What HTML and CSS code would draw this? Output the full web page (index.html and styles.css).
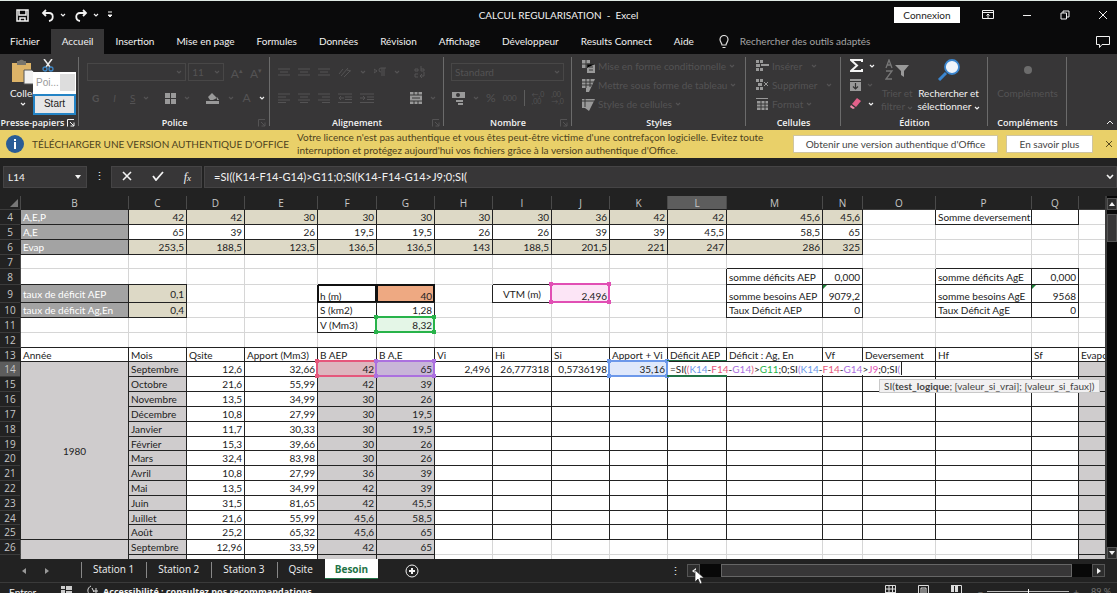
FILE: index.html
```html
<!DOCTYPE html>
<html lang="fr">
<head>
  <meta charset="UTF-8">
  <meta name="viewport" content="width=device-width, initial-scale=1.0">
  <title>CALCUL REGULARISATION - Excel</title>
  <link rel="stylesheet" href="styles.css">
</head>
<body>
  <!-- Shared icons -->
  <svg class="sprite" aria-hidden="true">
    <symbol id="chev" viewBox="0 0 6 4"><path d="M1 1l2 2 2-2" fill="none" stroke="currentColor" stroke-width="1.2"/></symbol>
    <symbol id="launch" viewBox="0 0 8 8"><path d="M.5 7.500V.5H7M3 3l4 4M7 3.500V7H3.500" fill="none" stroke="currentColor"/></symbol>
    <symbol id="left" viewBox="0 0 6 8"><path d="M5 1v6L1 4z" fill="currentColor"/></symbol>
    <symbol id="right" viewBox="0 0 6 8"><path d="M1 1v6l4-3z" fill="currentColor"/></symbol>
    <symbol id="up" viewBox="0 0 8 6"><path d="M1 5h6L4 1z" fill="currentColor"/></symbol>
    <symbol id="down" viewBox="0 0 8 6"><path d="M1 1h6L4 5z" fill="currentColor"/></symbol>
    <symbol id="lines-c" viewBox="0 0 12 10"><path d="M0 1h12M2 4h8M0 7h12M2 9.500h8" stroke="currentColor" fill="none"/></symbol>
    <symbol id="lines-l" viewBox="0 0 12 10"><path d="M0 1h12M0 4h8M0 7h12M0 9.500h8" stroke="currentColor" fill="none"/></symbol>
    <symbol id="lines-r" viewBox="0 0 12 10"><path d="M0 1h12M4 4h8M0 7h12M4 9.500h8" stroke="currentColor" fill="none"/></symbol>
    <symbol id="valign" viewBox="0 0 12 10"><path d="M0 2h12M2 5h8M0 8h12" stroke="currentColor" fill="none"/></symbol>
    <symbol id="indent" viewBox="0 0 14 10"><path d="M0 1h14M7 4h7M7 6.500h7M0 9.500h14M0 5h5M3 3l2 2-2 2" stroke="currentColor" fill="none"/></symbol>
    <symbol id="outdent" viewBox="0 0 14 10"><path d="M0 1h14M7 4h7M7 6.500h7M0 9.500h14M1 5h5M3 3L1 5l2 2" stroke="currentColor" fill="none"/></symbol>
  </svg>

  <div class="app">
    <header class="titlebar">
      <div class="quick">
        <button aria-label="Enregistrer"><svg width="13" height="13" viewBox="0 0 13 13"><path d="M1 1h11v11H1zM3 1v5h7V1M4 12V9h5v3" fill="none" stroke="currentColor" stroke-width="1.500"/></svg></button>
        <button aria-label="Annuler"><svg width="14" height="13" viewBox="0 0 14 13"><path d="M5 1L2 4l3 3M2 4h6c5 0 5 7 0 8" fill="none" stroke="currentColor" stroke-width="1.800"/></svg><svg width="6" height="4"><use href="#chev"/></svg></button>
        <button aria-label="Rétablir"><svg width="14" height="13" viewBox="0 0 14 13"><path d="M9 1l3 3-3 3M12 4H6c-5 0-5 7 0 8" fill="none" stroke="currentColor" stroke-width="1.800"/></svg><svg width="6" height="4"><use href="#chev"/></svg></button>
        <button aria-label="Personnaliser"><svg width="6" height="8" viewBox="0 0 6 8"><path d="M1 1h4M1 4h4L3 6z" stroke="currentColor" fill="currentColor"/></svg></button>
      </div>
      <h1>CALCUL REGULARISATION&nbsp; -&nbsp; Excel</h1>
      <div class="window-buttons">
        <button class="signin">Connexion</button>
        <button aria-label="Options du ruban"><svg width="12" height="10" viewBox="0 0 12 10"><path d="M.5.5h11v8H.5zM.5 2.500h11M6 8V4M4.500 5.500L6 4l1.500 1.500" fill="none" stroke="currentColor"/></svg></button>
        <button aria-label="Réduire"><svg width="10" height="10" viewBox="0 0 10 10"><path d="M1 5.500h8" stroke="currentColor"/></svg></button>
        <button aria-label="Restaurer"><svg width="10" height="10" viewBox="0 0 10 10"><path d="M1 3h5.500v6H1zM3 3V1h6v6H7" fill="none" stroke="currentColor"/></svg></button>
        <button aria-label="Fermer"><svg width="10" height="10" viewBox="0 0 10 10"><path d="M1 1l8 8M9 1L1 9" stroke="currentColor"/></svg></button>
      </div>
    </header>

    <nav class="tabs">
      <a href="#">Fichier</a>
      <a href="#" class="active">Accueil</a>
      <a href="#">Insertion</a>
      <a href="#">Mise en page</a>
      <a href="#">Formules</a>
      <a href="#">Données</a>
      <a href="#">Révision</a>
      <a href="#">Affichage</a>
      <a href="#">Développeur</a>
      <a href="#">Results Connect</a>
      <a href="#">Aide</a>
      <label class="tell-me">
        <svg width="10" height="14" viewBox="0 0 10 14"><path d="M3 10C3 8 1 7 1 4.500a4 4 0 018 0C9 7 7 8 7 10zM3.500 12.500h3" fill="none" stroke="#ddd" stroke-width="1.200"/></svg>
        <input type="text" placeholder="Rechercher des outils adaptés">
      </label>
      <button class="comments" aria-label="Commentaires"><svg width="14" height="12" viewBox="0 0 14 12"><path d="M.5.5h13v8H6l-2.500 3v-3h-3z" fill="none" stroke="currentColor"/></svg></button>
    </nav>

    <section class="ribbon">
      <div class="group clipboard">
        <div class="tools">
          <button class="big paste">
            <svg width="24" height="26" viewBox="0 0 24 26"><path d="M1 4h19v19H1z" fill="#dcb368"/><path d="M6 2h2a3 3 0 015 0h2v4H6z" fill="#77746c"/><path d="M13 11h8l3 3v11H13z" fill="#f1f1f1" stroke="#555"/></svg>
            <span>Coller</span>
            <svg width="6" height="4"><use href="#chev"/></svg>
          </button>
          <svg class="scissors" width="12" height="13" viewBox="0 0 12 13"><path d="M2 0l6 8M10 0L4 8" stroke="#eee" stroke-width="1.500"/><circle cx="3" cy="10" r="2" fill="none" stroke="#3f87c6" stroke-width="1.300"/><circle cx="9" cy="10" r="2" fill="none" stroke="#3f87c6" stroke-width="1.300"/></svg>
        </div>
        <div class="caption">Presse-papiers<svg width="8" height="8"><use href="#launch"/></svg></div>
        <div class="popup">
          <div class="popup-title"><span>Poi...</span><i></i></div>
          <button>Start</button>
        </div>
      </div>

      <div class="group font">
        <div class="tools rows off">
          <div class="line">
            <span class="combo family"><i></i><svg width="6" height="4"><use href="#chev"/></svg></span>
            <span class="combo size"><i>11</i><svg width="6" height="4"><use href="#chev"/></svg></span>
            <span class="glyph grow">A<sup>▴</sup></span>
            <span class="glyph grow">A<sup>▾</sup></span>
          </div>
          <div class="line styles-line">
            <b>G</b><em>I</em><u>S</u><svg width="6" height="4"><use href="#chev"/></svg>
            <i class="bar"></i>
            <svg class="lit" width="11" height="11" viewBox="0 0 11 11"><path d="M0 0h5v5H0zM6 0h5v5H6zM0 6h5v5H0zM6 6h5v5H6z" fill="currentColor"/></svg><svg width="6" height="4"><use href="#chev"/></svg>
            <i class="bar"></i>
            <svg class="lit" width="14" height="12" viewBox="0 0 14 12"><path d="M2 5l4-4 5 5-4 2H4zM11 5l2 3h-2zM0 9h13v3H0z" fill="currentColor"/></svg><svg width="6" height="4"><use href="#chev"/></svg>
            <span class="glyph">A</span><svg class="bright" width="6" height="4"><use href="#chev"/></svg>
          </div>
        </div>
        <div class="caption">Police<svg class="dim" width="8" height="8"><use href="#launch"/></svg></div>
      </div>

      <div class="group align">
        <div class="tools rows off">
          <div class="line">
            <svg width="12" height="10"><use href="#valign"/></svg>
            <svg width="12" height="10"><use href="#valign"/></svg>
            <svg width="12" height="10"><use href="#valign"/></svg>
            <svg width="14" height="12" viewBox="0 0 14 12"><path d="M1 8l4-5M3 10l7-8M6 11l6-6M9 4l4 1" stroke="currentColor" fill="none"/></svg><svg width="6" height="4"><use href="#chev"/></svg>
            <svg width="12" height="10" viewBox="0 0 12 10"><path d="M0 2l3 2-3 2zM8 1v8M10 1v8M12 1H7a2 2 0 000 4" stroke="currentColor" fill="none"/></svg><svg width="6" height="4"><use href="#chev"/></svg>
            <svg class="wrap" width="12" height="12" viewBox="0 0 12 12"><path d="M1 3h3v2H1zM7 0v5h3V3H7M4 8H1v3h3M10 6v4H6M8 8l-2 2 2 2" stroke="currentColor" fill="none"/></svg>
          </div>
          <div class="line">
            <svg width="12" height="10"><use href="#lines-l"/></svg>
            <svg width="12" height="10"><use href="#lines-c"/></svg>
            <svg width="12" height="10"><use href="#lines-r"/></svg>
            <svg width="14" height="10"><use href="#outdent"/></svg>
            <svg width="14" height="10"><use href="#indent"/></svg>
            <svg class="lit merge" width="12" height="12" viewBox="0 0 12 12"><path d="M0 0h12v12H0z" fill="currentColor"/><path d="M0 3h12M0 9h12M4 0v3M8 0v3M4 9v3M8 9v3M2 6h8" stroke="#373637"/></svg><svg width="6" height="4"><use href="#chev"/></svg>
          </div>
        </div>
        <div class="caption">Alignement<svg class="dim" width="8" height="8"><use href="#launch"/></svg></div>
      </div>

      <div class="group number">
        <div class="tools rows off">
          <div class="line"><span class="combo format"><i>Standard</i><svg width="6" height="4"><use href="#chev"/></svg></span></div>
          <div class="line">
            <svg class="lit" width="14" height="14" viewBox="0 0 14 14"><path d="M0 1h13v6H0zM4 9h7v2H4zM6 12h5v2H6z" fill="currentColor"/><circle cx="6" cy="4" r="2" fill="#373637"/></svg><svg width="6" height="4"><use href="#chev"/></svg>
            <span class="glyph">%</span><span class="small">000</span>
            <i class="bar"></i>
            <span class="decimals">←,0<br>,00</span><span class="decimals">,00<br>→,0</span>
          </div>
        </div>
        <div class="caption">Nombre<svg class="dim" width="8" height="8"><use href="#launch"/></svg></div>
      </div>

      <div class="group looks">
        <div class="tools list off">
          <button><svg class="lit" width="13" height="13" viewBox="0 0 13 13"><path d="M0 0h8v4h5v9H5V8H0z" fill="currentColor"/><path d="M0 4h8M4 0v8M7 7h4M7 10h4M5 8V4h8" stroke="#373637"/></svg>Mise en forme conditionnelle<svg width="6" height="4"><use href="#chev"/></svg></button>
          <button><svg class="lit" width="13" height="13" viewBox="0 0 13 13"><path d="M0 0h13L7 13H4V9H0z" fill="currentColor"/><path d="M0 3h12M4 0v9M8 0v8M0 6h10" stroke="#373637"/></svg>Mettre sous forme de tableau<svg width="6" height="4"><use href="#chev"/></svg></button>
          <button><svg class="lit" width="13" height="13" viewBox="0 0 13 13"><path d="M0 1h13L7 13 3 10H0z" fill="currentColor"/><path d="M0 3h12M3 1v8" stroke="#373637"/></svg>Styles de cellules<svg width="6" height="4"><use href="#chev"/></svg></button>
        </div>
        <div class="caption">Styles</div>
      </div>

      <div class="group cells">
        <div class="tools list off">
          <button><svg class="lit" width="13" height="12" viewBox="0 0 13 12"><path d="M0 0h3v3H0zM4 0h3v3H4zM0 4h4v3H0zM5 4h8v2H5zM0 8h3v3H0zM4 8h3v3H4z" fill="currentColor"/></svg>Insérer<svg class="far" width="6" height="4"><use href="#chev"/></svg></button>
          <button><svg class="lit" width="13" height="12" viewBox="0 0 13 12"><path d="M0 0h3v3H0zM4 0h3v3H4zM2 4h4v3H2zM0 8h3v3H0zM4 8h3v3H4z" fill="currentColor"/><path d="M8 3l4 4M12 3L8 7" stroke="currentColor"/></svg>Supprimer<svg class="far" width="6" height="4"><use href="#chev"/></svg></button>
          <button><svg class="lit" width="13" height="12" viewBox="0 0 13 12"><path d="M0 0h12v1H0zM1 3h11v9H1z" fill="currentColor"/><path d="M1 6h11M1 9h11M5 3v9M9 3v9" stroke="#373637"/></svg>Format<svg width="6" height="4"><use href="#chev"/></svg></button>
        </div>
        <div class="caption">Cellules</div>
      </div>

      <div class="group edit">
        <div class="tools">
          <div class="stack">
            <button aria-label="Somme"><svg width="13" height="13" viewBox="0 0 13 13"><path d="M12 3V1H1l6 5.500L1 12h11v-2" fill="none" stroke="#f4f4f4" stroke-width="2"/></svg><svg width="6" height="4"><use href="#chev"/></svg></button>
            <button aria-label="Remplissage" class="off"><svg class="lit" width="11" height="12" viewBox="0 0 11 12"><path d="M0 0h11v12H0z" fill="currentColor"/><path d="M0 2.500h11M5.500 4v6M3 7.500L5.500 10 8 7.500" stroke="#333" fill="none" stroke-width="1.200"/></svg><svg width="6" height="4"><use href="#chev"/></svg></button>
            <button aria-label="Effacer"><svg width="12" height="11" viewBox="0 0 12 11"><path d="M7 0l4 3-5 6-4-3z" fill="#e4608a"/><path d="M1 7l4 3-2 1-3-2z" fill="#f08cab"/></svg><svg width="6" height="4"><use href="#chev"/></svg></button>
          </div>
          <button class="big off sort">
            <svg class="lit" width="24" height="22" viewBox="0 0 24 22"><path d="M1 9l3-8 3 8M2 6h4M1 12h6l-6 8h6" fill="none" stroke="#777" stroke-width="1.300"/><path d="M10 6h14l-5 6v6l-3-2v-4z" fill="currentColor"/></svg>
            <span>Trier et<br>filtrer <svg width="6" height="4"><use href="#chev"/></svg></span>
          </button>
          <button class="big find">
            <svg width="24" height="22" viewBox="0 0 24 22"><path d="M2 21l7-7" stroke="#3b86cf" stroke-width="3"/><circle cx="15" cy="8" r="7" fill="#eef4fb" stroke="#3b86cf" stroke-width="1.800"/></svg>
            <span>Rechercher et<br>sélectionner <svg width="6" height="4"><use href="#chev"/></svg></span>
          </button>
        </div>
        <div class="caption">Édition</div>
      </div>

      <div class="group addins">
        <div class="tools"><button class="big off"><svg width="24" height="22" viewBox="0 0 24 22"><circle cx="12" cy="11" r="4" fill="#6c6c6c"/></svg><span>Compléments</span></button></div>
        <div class="caption">Compléments</div>
      </div>
      <button class="collapse" aria-label="Réduire le ruban"><svg width="8" height="5" viewBox="0 0 8 5"><path d="M1 4l3-3 3 3" fill="none" stroke="currentColor"/></svg></button>
    </section>

    <section class="notice">
      <svg width="18" height="18" viewBox="0 0 18 18"><circle cx="9" cy="9" r="9" fill="#2a5c96"/><path d="M8 7h2v7H8zM8 4h2v2H8z" fill="#fff"/></svg>
      <strong>TÉLÉCHARGER UNE VERSION AUTHENTIQUE D'OFFICE</strong>
      <p>Votre licence n'est pas authentique et vous êtes peut-être victime d'une contrefaçon logicielle. Evitez toute<br>interruption et protégez aujourd'hui vos fichiers grâce à la version authentique d'Office.</p>
      <button class="get">Obtenir une version authentique d'Office</button>
      <button class="more">En savoir plus</button>
      <button class="dismiss" aria-label="Fermer"><svg width="8" height="8" viewBox="0 0 8 8"><path d="M1 1l6 6M7 1L1 7" stroke="#574a1c"/></svg></button>
    </section>

    <section class="formula-bar">
      <div class="name-box"><input type="text" value="L14" aria-label="Zone Nom"><svg width="8" height="6"><use href="#down"/></svg></div>
      <span class="dots">⋮</span>
      <div class="fx">
        <button aria-label="Annuler"><svg width="10" height="10" viewBox="0 0 10 10"><path d="M1 1l8 8M9 1L1 9" stroke="currentColor" stroke-width="1.600"/></svg></button>
        <button aria-label="Entrer"><svg width="12" height="10" viewBox="0 0 12 10"><path d="M1 5l3 4 7-8" fill="none" stroke="currentColor" stroke-width="1.800"/></svg></button>
        <button class="fn" aria-label="Insérer une fonction"><i>f<small>x</small></i></button>
      </div>
      <div class="formula"><input type="text" value="=SI((K14-F14-G14)&gt;G11;0;SI(K14-F14-G14&gt;J9;0;SI(" aria-label="Barre de formule"><svg width="8" height="6" viewBox="0 0 8 6"><path d="M1 1l3 3 3-3" fill="none" stroke="currentColor" stroke-width="1.600"/></svg></div>
    </section>

    <main class="sheet">
      <div class="grid">
        <table>
          <colgroup>
            <col class="w21"><col class="w108"><col class="w58"><col class="w58"><col class="w73"><col class="w59"><col class="w58"><col class="w58"><col class="w59"><col class="w58"><col class="w58"><col class="w59"><col class="w96"><col class="w40"><col class="w73"><col class="w96"><col class="w47"><col class="w58">
          </colgroup>
          <thead>
            <tr><th class="corner"><svg width="8" height="8" viewBox="0 0 8 8"><path d="M8 0v8H0z" fill="#777"/></svg></th><th>B</th><th>C</th><th>D</th><th>E</th><th>F</th><th>G</th><th>H</th><th>I</th><th>J</th><th>K</th><th class="current">L</th><th>M</th><th>N</th><th>O</th><th>P</th><th>Q</th><th></th></tr>
          </thead>
          <tbody>
            <tr><th>4</th><td class="dark">A,E,P</td><td class="tan">42</td><td class="tan">42</td><td class="tan">30</td><td class="tan">30</td><td class="tan">30</td><td class="tan">30</td><td class="tan">30</td><td class="tan">36</td><td class="tan">42</td><td class="tan">42</td><td class="tan">45,6</td><td class="tan">45,6</td><td></td><td class="box txt">Somme deversement</td><td class="box"></td><td></td></tr>
            <tr><th>5</th><td class="dark">A,E</td><td class="box">65</td><td class="box">39</td><td class="box">26</td><td class="box">19,5</td><td class="box">19,5</td><td class="box">26</td><td class="box">26</td><td class="box">39</td><td class="box">39</td><td class="box">45,5</td><td class="box">58,5</td><td class="box">65</td><td></td><td></td><td></td><td></td></tr>
            <tr><th>6</th><td class="dark">Evap</td><td class="tan">253,5</td><td class="tan">188,5</td><td class="tan">123,5</td><td class="tan">136,5</td><td class="tan">136,5</td><td class="tan">143</td><td class="tan">188,5</td><td class="tan">201,5</td><td class="tan">221</td><td class="tan">247</td><td class="tan">286</td><td class="tan">325</td><td></td><td></td><td></td><td></td></tr>
            <tr class="short"><th>7</th><td></td><td></td><td></td><td></td><td></td><td></td><td></td><td></td><td></td><td></td><td></td><td></td><td></td><td></td><td></td><td></td><td></td></tr>
            <tr class="high"><th>8</th><td></td><td></td><td></td><td></td><td></td><td></td><td></td><td></td><td></td><td></td><td></td><td class="box txt">somme déficits AEP</td><td class="box">0,000</td><td></td><td class="box txt">somme déficits AgE</td><td class="box">0,000</td><td></td></tr>
            <tr class="tall"><th>9</th><td class="dark">taux de déficit AEP</td><td class="tan">0,1</td><td></td><td></td><td class="thick txt low">h (m)</td><td class="thick orange low">40</td><td></td><td class="box mid">VTM (m)</td><td class="low ref pink">2,496<i></i></td><td></td><td></td><td class="box txt low">somme besoins AEP</td><td class="box low flag">9079,2</td><td></td><td class="box txt low">somme besoins AgE</td><td class="box low flag">9568</td><td></td></tr>
            <tr><th>10</th><td class="dark">taux de déficit Ag,En</td><td class="tan">0,4</td><td></td><td></td><td class="box txt">S (km2)</td><td class="box">1,28</td><td></td><td></td><td></td><td></td><td></td><td class="box txt">Taux Déficit AEP</td><td class="box">0</td><td></td><td class="box txt">Taux Déficit AgE</td><td class="box">0</td><td></td></tr>
            <tr><th>11</th><td></td><td></td><td></td><td></td><td class="box txt">V (Mm3)</td><td class="ref green">8,32<i></i></td><td></td><td></td><td></td><td></td><td></td><td></td><td></td><td></td><td></td><td></td><td></td></tr>
            <tr><th>12</th><td></td><td></td><td></td><td></td><td></td><td></td><td></td><td></td><td></td><td></td><td></td><td></td><td></td><td></td><td></td><td></td><td></td></tr>
            <tr class="short labels"><th>13</th><td>Année</td><td>Mois</td><td>Qsite</td><td>Apport (Mm3)</td><td>B AEP</td><td>B A,E</td><td>Vi</td><td>Hi</td><td>Si</td><td>Apport + Vi</td><td>Déficit AEP</td><td>Déficit : Ag, En</td><td>Vf</td><td>Deversement</td><td>Hf</td><td>Sf</td><td>Evaporation</td></tr>
          </tbody>
          <tbody class="months">
            <tr><th class="current">14</th><td class="gray mid" rowspan="12">1980</td><td class="gray txt">Septembre</td><td>12,6</td><td>32,66</td><td class="gray ref red">42<i></i></td><td class="gray ref purple">65<i></i></td><td>2,496</td><td>26,777318</td><td>0,5736198</td><td class="ref blue">35,16<i></i></td>
              <td class="editing"><span class="typed">=SI(<span class="c-red">(</span><span class="c-blue">K14</span>-<span class="c-red">F14</span>-<span class="c-purple">G14</span><span class="c-red">)</span>&gt;<span class="c-green">G11</span>;0;SI<span class="c-purple">(</span><span class="c-blue">K14</span>-<span class="c-red">F14</span>-<span class="c-purple">G14</span>&gt;<span class="c-pink">J9</span>;0;SI<span class="c-purple">(</span></span><span class="hint">SI(<b>test_logique</b>; [valeur_si_vrai]; [valeur_si_faux])</span></td>
              <td></td><td></td><td></td><td></td><td></td><td class="gray"></td></tr>
            <tr><th>15</th><td class="gray txt">Octobre</td><td>21,6</td><td>55,99</td><td class="gray">42</td><td class="gray">39</td><td></td><td></td><td></td><td></td><td></td><td></td><td></td><td></td><td></td><td></td><td class="gray"></td></tr>
            <tr><th>16</th><td class="gray txt">Novembre</td><td>13,5</td><td>34,99</td><td class="gray">30</td><td class="gray">26</td><td></td><td></td><td></td><td></td><td></td><td></td><td></td><td></td><td></td><td></td><td class="gray"></td></tr>
            <tr><th>17</th><td class="gray txt">Décembre</td><td>10,8</td><td>27,99</td><td class="gray">30</td><td class="gray">19,5</td><td></td><td></td><td></td><td></td><td></td><td></td><td></td><td></td><td></td><td></td><td class="gray"></td></tr>
            <tr><th>18</th><td class="gray txt">Janvier</td><td>11,7</td><td>30,33</td><td class="gray">30</td><td class="gray">19,5</td><td></td><td></td><td></td><td></td><td></td><td></td><td></td><td></td><td></td><td></td><td class="gray"></td></tr>
            <tr class="short"><th>19</th><td class="gray txt">Février</td><td>15,3</td><td>39,66</td><td class="gray">30</td><td class="gray">26</td><td></td><td></td><td></td><td></td><td></td><td></td><td></td><td></td><td></td><td></td><td class="gray"></td></tr>
            <tr><th>20</th><td class="gray txt">Mars</td><td>32,4</td><td>83,98</td><td class="gray">30</td><td class="gray">26</td><td></td><td></td><td></td><td></td><td></td><td></td><td></td><td></td><td></td><td></td><td class="gray"></td></tr>
            <tr><th>21</th><td class="gray txt">Avril</td><td>10,8</td><td>27,99</td><td class="gray">36</td><td class="gray">39</td><td></td><td></td><td></td><td></td><td></td><td></td><td></td><td></td><td></td><td></td><td class="gray"></td></tr>
            <tr><th>22</th><td class="gray txt">Mai</td><td>13,5</td><td>34,99</td><td class="gray">42</td><td class="gray">39</td><td></td><td></td><td></td><td></td><td></td><td></td><td></td><td></td><td></td><td></td><td class="gray"></td></tr>
            <tr><th>23</th><td class="gray txt">Juin</td><td>31,5</td><td>81,65</td><td class="gray">42</td><td class="gray">45,5</td><td></td><td></td><td></td><td></td><td></td><td></td><td></td><td></td><td></td><td></td><td class="gray"></td></tr>
            <tr class="short"><th>24</th><td class="gray txt">Juillet</td><td>21,6</td><td>55,99</td><td class="gray">45,6</td><td class="gray">58,5</td><td></td><td></td><td></td><td></td><td></td><td></td><td></td><td></td><td></td><td></td><td class="gray"></td></tr>
            <tr><th>25</th><td class="gray txt">Août</td><td>25,2</td><td>65,32</td><td class="gray">45,6</td><td class="gray">65</td><td></td><td></td><td></td><td></td><td></td><td></td><td></td><td></td><td></td><td></td><td class="gray"></td></tr>
          </tbody>
          <tbody>
            <tr><th>26</th><td class="gray" rowspan="2"></td><td class="gray box txt">Septembre</td><td class="box">12,96</td><td class="box">33,59</td><td class="gray box">42</td><td class="gray box">65</td><td></td><td></td><td></td><td></td><td></td><td></td><td></td><td></td><td></td><td></td><td class="gray box"></td></tr>
            <tr><th></th><td class="gray box"></td><td class="box"></td><td class="box"></td><td class="gray box"></td><td class="gray box"></td><td></td><td></td><td></td><td></td><td></td><td></td><td></td><td></td><td></td><td></td><td class="gray box"></td></tr>
          </tbody>
        </table>
      </div>
      <div class="vscroll">
        <button aria-label="Haut"><svg width="8" height="6"><use href="#up"/></svg></button>
        <i class="thumb"></i>
        <button aria-label="Bas"><svg width="8" height="6"><use href="#down"/></svg></button>
      </div>
    </main>

    <nav class="sheet-tabs">
      <button class="arrow" aria-label="Précédent"><svg width="6" height="8"><use href="#left"/></svg></button>
      <button class="arrow" aria-label="Suivant"><svg width="6" height="8"><use href="#right"/></svg></button>
      <div class="names">
        <a href="#">Station 1</a>
        <a href="#">Station 2</a>
        <a href="#">Station 3</a>
        <a href="#">Qsite</a>
        <a href="#" class="active">Besoin</a>
      </div>
      <button class="add" aria-label="Nouvelle feuille"><svg width="14" height="14" viewBox="0 0 14 14"><circle cx="7" cy="7" r="6" fill="none" stroke="currentColor"/><path d="M4 7h6M7 4v6" stroke="currentColor" stroke-width="2"/></svg></button>
      <span class="dots">⋮</span>
      <div class="hscroll">
        <button aria-label="Gauche"><svg width="6" height="8"><use href="#left"/></svg></button>
        <i class="thumb"></i>
        <button aria-label="Droite"><svg width="6" height="8"><use href="#right"/></svg></button>
        <svg class="pointer" width="10" height="16" viewBox="0 0 10 16"><path d="M1 1v12l3-3 2 5 2-1-2-5h4z" fill="#fff" stroke="#222" stroke-width=".7"/></svg>
      </div>
    </nav>

    <footer class="status">
      <span class="mode">Entrer</span>
      <svg class="macro" width="12" height="10" viewBox="0 0 12 10"><path d="M0 1h4v3H0zM5 1h6v4H5zM0 5h4v5H0zM5 6h6v4H5z" fill="#ccc"/></svg>
      <svg width="12" height="10" viewBox="0 0 12 10"><path d="M4 1C0 3 0 7 3 10M5 3l2 4M6 6h5M9 3v6" stroke="#ddd" fill="none"/></svg>
      <b>Accessibilité : consultez nos recommandations</b>
      <div class="views">
        <svg width="12" height="10" viewBox="0 0 12 10"><path d="M.5.500h10v10h-10zM.5 4h10M.5 7.500h10M4 0v10M7.500 0v10" stroke="#ddd" fill="none"/></svg>
        <svg width="12" height="10" viewBox="0 0 12 10"><path d="M.5.500h10v10h-10zM3 10V3h5v7M4 5h3M4 7h3" stroke="#ddd" fill="none"/></svg>
        <svg width="12" height="10" viewBox="0 0 12 10"><path d="M0 0h3v7H0zM4 0h3v7H4z" fill="#ddd"/><path d="M.5.500h10v10" stroke="#ddd" fill="none"/></svg>
      </div>
      <div class="zoom"><span>−</span><i class="slider"></i><span>+</span><span class="pct">89 %</span></div>
    </footer>
  </div>
</body>
</html>
```
FILE: styles.css
```css
* {
  box-sizing: border-box;
}

body {
  margin: 0;
  background: #222;
  color: #f2f2f2;
  font: 10px/14px Lato, 'Open Sans', sans-serif;
}

button {
  padding: 0;
  border: 0;
  background: none;
  color: inherit;
  font: inherit;
}

input {
  min-width: 0;
  padding: 0;
  border: 0;
  outline: 0;
  background: none;
  color: inherit;
  font: inherit;
}

a {
  color: inherit;
  text-decoration: none;
}

svg {
  flex: none;
}

.sprite {
  display: none;
}

.app {
  display: flex;
  flex-direction: column;
  height: 100vh;
  overflow: hidden;
  white-space: nowrap;
}

/* Title bar */
.titlebar {
  display: grid;
  grid-template-columns: 1fr auto 1fr;
  align-items: center;
  flex: none;
  height: 29px;
  border-top: 1px solid #dfe9e4;
  background: #0a0a0b;
}

.titlebar h1 {
  margin: 0;
  font-size: 10px;
  font-weight: 400;
}

.quick {
  display: flex;
  align-items: center;
  gap: 12px;
  padding-left: 16px;
}

.quick button {
  display: flex;
  align-items: center;
  gap: 5px;
}

.quick button + button + button {
  margin-left: -4px;
}

.window-buttons {
  display: flex;
  justify-content: flex-end;
  align-items: center;
  gap: 28px;
  padding-right: 9px;
}

.window-buttons button {
  display: flex;
}

.window-buttons .signin {
  justify-content: center;
  width: 66px;
  margin-right: -6px;
  line-height: 16px;
  background: #fff;
  color: #222;
}

/* Ribbon tabs */
.tabs {
  display: flex;
  flex: none;
  height: 25px;
  background: #0a0a0b;
  line-height: 25px;
}

.tabs a {
  padding: 0 11px;
}

.tabs a:first-child {
  padding-left: 10px;
}

.tabs .active {
  background: #373637;
}

.tell-me {
  display: flex;
  align-items: center;
  flex: 1;
  gap: 11px;
  padding-left: 14px;
}

.tell-me input {
  flex: 1;
}

.tell-me input::placeholder {
  color: #a5a5a5;
  opacity: 1;
}

.comments {
  display: flex;
  align-items: center;
  padding-right: 7px;
}

/* Ribbon */
.ribbon {
  display: flex;
  flex: none;
  height: 76px;
  background: #373637;
}

.group {
  position: relative;
  display: flex;
  flex-direction: column;
  flex: none;
}

.group::after {
  content: "";
  position: absolute;
  top: 3px;
  right: 0;
  bottom: 4px;
  width: 1px;
  background: #6b6b6b;
}

.clipboard { width: 79px; }
.font { width: 191px; }
.align { width: 174px; }
.number { width: 128px; }
.looks { width: 174px; }
.cells { width: 95px; }
.edit { width: 147px; }
.addins { width: 79px; }

.tools {
  display: flex;
  flex: 1;
  padding: 5px 6px 0;
}

.caption {
  position: relative;
  height: 14px;
  text-align: center;
  font: 600 9px/14px 'Open Sans', sans-serif;
}

.caption svg {
  position: absolute;
  top: 3px;
  right: 4px;
}

.clipboard .caption {
  padding-right: 14px;
}

.dim,
.off {
  color: #545354;
}

.lit {
  color: #999;
}

.bright {
  color: #eee;
}

.big {
  display: flex;
  flex-direction: column;
  align-items: center;
  line-height: 13px;
}

.big span {
  margin-top: 6px;
}

.paste {
  margin-left: 4px;
}

.paste span {
  margin: 2px 0;
}

.scissors {
  margin-left: 6px;
}

.popup {
  position: absolute;
  z-index: 2;
  top: 18px;
  left: 33px;
  width: 43px;
  background: #fff;
  font: 10px/21px 'Liberation Sans', sans-serif;
}

.popup-title {
  display: flex;
  justify-content: space-between;
  padding-left: 3px;
  color: #999;
}

.popup-title i {
  width: 15px;
  margin: 2px 1px;
  background: #ddd;
}

.popup button {
  width: 100%;
  height: 21px;
  border: 2px solid #2484c6;
  background: #e6e6e8;
  color: #222;
  line-height: 16px;
}

.rows {
  flex-direction: column;
  gap: 8px;
  padding: 9px 8px 0;
}

.line {
  display: flex;
  align-items: center;
  gap: 7px;
  height: 18px;
}

.combo {
  display: flex;
  justify-content: space-between;
  align-items: center;
  height: 18px;
  padding: 0 3px;
  border: 1px solid #484747;
}

.combo i {
  font-style: normal;
}

.family { width: 101px; }
.size { width: 36px; margin-left: -5px; }
.format { width: 115px; margin-left: -1px; }

.glyph {
  font-size: 12px;
}

.grow sup {
  font-size: 7px;
}

.styles-line {
  gap: 8px;
  padding-left: 5px;
}

.styles-line b,
.styles-line em {
  margin-right: 6px;
}

.bar {
  width: 1px;
  height: 16px;
  background: #5d5d5d;
}

.align .line {
  gap: 8px;
}

.wrap {
  margin-left: 6px;
}

.merge {
  margin-left: 28px;
}

.small {
  font-size: 8px;
}

.decimals {
  font-size: 7px;
  line-height: 7px;
}

.list {
  flex-direction: column;
  gap: 5px;
  padding: 5px 10px 0;
}

.list button {
  display: flex;
  align-items: center;
  gap: 3px;
  height: 14px;
}

.far {
  margin-left: 6px;
}

.stack {
  display: flex;
  flex-direction: column;
  gap: 6px;
  padding-left: 3px;
}

.stack button {
  display: flex;
  align-items: center;
  gap: 6px;
  height: 13px;
}

.sort {
  margin-left: 6px;
}

.find {
  margin-left: 4px;
}

.addins .tools {
  justify-content: center;
}

.collapse {
  margin: auto 3px 2px auto;
}

/* Licence notice */
.notice {
  display: flex;
  align-items: center;
  flex: none;
  gap: 8px;
  height: 28px;
  padding: 0 4px 0 6px;
  background: #e9d069;
  color: #4d4220;
}

.notice strong {
  font-weight: 400;
}

.notice p {
  flex: 1;
  margin: 0;
  line-height: 13px;
}

.notice button {
  height: 18px;
}

.notice .get,
.notice .more {
  border: 1px solid #cfc5a0;
  background: #fff;
  color: #444;
}

.notice .get { width: 205px; }
.notice .more { width: 87px; }

.notice .dismiss {
  padding: 0 0 0 4px;
}

/* Formula bar */
.formula-bar {
  display: flex;
  flex: none;
  height: 38px;
  padding: 8px 0;
  background: #222;
}

.name-box,
.fx,
.formula {
  display: flex;
  align-items: center;
  border: 1px solid #454445;
  background: #373637;
}

.name-box {
  width: 84px;
  margin-left: 3px;
  padding: 0 4px;
}

.name-box input {
  flex: 1;
}

.dots {
  width: 24px;
  text-align: center;
  font-size: 11px;
  line-height: 20px;
}

.fx {
  justify-content: space-around;
  width: 91px;
  margin-right: 2px;
}

.fx .fn {
  font: italic 12px/14px 'Liberation Serif', serif;
}

.fn small {
  font-size: 9px;
}

.formula {
  flex: 1;
  padding: 0 2px 0 9px;
  font-size: 11px;
}

.formula input {
  flex: 1;
}

/* Sheet */
.sheet {
  display: flex;
  flex: 1;
  min-height: 0;
}

.grid {
  flex: 1;
  overflow: hidden;
  background: #fff;
  color: #222;
  line-height: 12px;
}

table {
  width: 1137px;
  border-spacing: 0;
  table-layout: fixed;
}

.w21 { width: 21px; }
.w40 { width: 40px; }
.w47 { width: 47px; }
.w58 { width: 58px; }
.w59 { width: 59px; }
.w73 { width: 73px; }
.w96 { width: 96px; }
.w108 { width: 108px; }

th {
  height: 15px;
  padding: 0;
  border-right: 1px solid #4a4a4a;
  border-bottom: 1px solid #3c3c3c;
  background: #222;
  color: #c8c8c8;
  font: 10px/12px 'Open Sans', sans-serif;
}

thead th {
  height: 14px;
}

.corner svg {
  display: block;
  margin-left: 10px;
}

th.current {
  background: #5d5d5d;
}

thead .current {
  border-bottom-color: #217346;
}

tbody .current {
  border-right-color: #217346;
}

td {
  position: relative;
  height: 15px;
  padding: 0 2px;
  border-right: 1px solid #d6d6d6;
  border-bottom: 1px solid #d6d6d6;
  text-align: right;
}

.short > * { height: 14px; }
.high > * { height: 16px; }
.tall > * { height: 18px; }

.box,
.tan,
.dark,
.labels td,
.months td {
  border-color: #222;
  background: #fff;
  box-shadow: -1px 0 #222, 0 -1px #222;
}

td.tan {
  background: #ddd9c6;
}

td.dark {
  background: #a3a3a3;
  color: #fff;
  text-align: left;
}

td.gray {
  border-color: #222;
  background: #cfcccd;
}

.txt,
.labels td {
  text-align: left;
}

td.mid {
  text-align: center;
}

.low {
  vertical-align: bottom;
}

.labels td {
  overflow: hidden;
}

.thick {
  border-color: #111;
  box-shadow: -1px 0 #111, 0 -1px #111, inset 0 0 0 1px #111;
}

.orange {
  background: #eea982;
}

.flag::before {
  content: "";
  position: absolute;
  top: 0;
  left: 0;
  border: 2px solid #1c8038;
  border-right-color: transparent;
  border-bottom-color: transparent;
}

/* Ranges used by the formula: a frame with a handle in each corner */
.ref i {
  position: absolute;
  z-index: 1;
  inset: -2px -1px -1px -2px;
  border: 2px solid var(--ref);
}

.ref i::before,
.ref i::after {
  content: "";
  position: absolute;
  top: -3px;
  left: -3px;
  width: 4px;
  height: 4px;
  background: var(--ref);
  box-shadow: 0 var(--drop, 15px) var(--ref);
}

.ref i::after {
  right: -3px;
  left: auto;
}

.red { --ref: #e5577c; }
.purple { --ref: #ab70df; }
.blue { --ref: #6c98ea; }
.green { --ref: #28b34a; }
.pink { --ref: #e14fb4; --drop: 18px; }

.months td.red { background: #ddb6bf; }
.months td.purple { background: #c8b5d8; }
.months td.blue { background: #dfe8fb; }
td.green { background: #e4f6e7; }
td.pink { background: #fce5f6; }

.typed {
  position: absolute;
  z-index: 2;
  top: 0;
  left: 0;
  height: 13px;
  padding: 1px 1px 0 2px;
  border-right: 1px solid #222;
  background: #fff;
}

.editing::after {
  content: "";
  position: absolute;
  z-index: 3;
  inset: -2px -1px -1px -1px;
  border-top: 1px solid #217346;
  border-bottom: 2px solid #217346;
}

.c-red { color: #e5577c; }
.c-purple { color: #ab70df; }
.c-blue { color: #6c98ea; }
.c-green { color: #28b34a; }
.c-pink { color: #e14fb4; }

.hint {
  position: absolute;
  z-index: 4;
  top: 17px;
  left: 211px;
  padding: 0 4px;
  border: 1px solid #c9c9c9;
  background: #f1f0f1;
  color: #444;
}

/* Scroll bars */
.vscroll {
  display: flex;
  flex-direction: column;
  flex: none;
  width: 12px;
  padding-top: 2px;
  border-left: 2px solid #3b3b3b;
  background: #080808;
}

.vscroll button,
.hscroll button {
  display: flex;
  justify-content: center;
  align-items: center;
  flex: none;
  height: 12px;
  border: 1px solid #555;
  background: #2d2d2d;
}

.vscroll .thumb {
  height: 28px;
  margin: 4px 0 auto;
  border: 1px solid #555;
  background: #373637;
}

.hscroll {
  position: relative;
  display: flex;
  align-items: center;
  width: 418px;
  margin-right: 12px;
  height: 13px;
  background: #080808;
}

.hscroll button {
  width: 13px;
  height: 13px;
}

.hscroll .thumb {
  flex: 1;
  height: 13px;
  margin: 0 20px 0 21px;
  border: 1px solid #666;
  background: #373637;
}

.pointer {
  position: absolute;
  top: 5px;
  left: 7px;
}

/* Sheet tabs */
.sheet-tabs {
  display: flex;
  align-items: center;
  flex: none;
  height: 23px;
  background: #222;
}

.arrow {
  display: flex;
  width: 6px;
  margin-left: 17px;
  color: #999;
}

.arrow:first-child {
  margin-left: 21px;
}

.names {
  display: flex;
  align-self: stretch;
  margin-left: 31px;
  padding-bottom: 3px;
  font: 10px/20px 'Open Sans', sans-serif;
}

.names a {
  position: relative;
  padding: 0 12px;
}

.names a::before {
  content: "";
  position: absolute;
  top: 3px;
  left: 0;
  height: 16px;
  border-left: 1px solid #888;
}

.names .active {
  padding: 0 10px;
  border-bottom: 1px solid #217346;
  background: #fff;
  color: #217346;
  font-weight: 700;
}

.names .active::before {
  display: none;
}

.add {
  display: flex;
  margin: 0 auto 0 27px;
}

/* Status bar */
.status {
  display: flex;
  flex: none;
  height: 11px;
  padding: 2px 6px 0 9px;
  border-top: 1px solid #3a3a3a;
  overflow: hidden;
}

.status b {
  margin-left: 4px;
  font: 700 9px/14px 'Open Sans', sans-serif;
}

.macro {
  margin: 0 14px 0 25px;
}

.views {
  display: flex;
  gap: 21px;
  margin-left: auto;
}

.zoom {
  display: flex;
  gap: 4px;
  margin-left: 14px;
  color: #777;
}

.slider {
  position: relative;
  width: 82px;
  height: 1px;
  margin-top: 6px;
  background: #bbb;
}

.slider::before {
  content: "";
  position: absolute;
  top: -2px;
  left: 41px;
  width: 1px;
  height: 5px;
  background: #fff;
}

.pct {
  margin-left: 8px;
  font-size: 9px;
}
```
